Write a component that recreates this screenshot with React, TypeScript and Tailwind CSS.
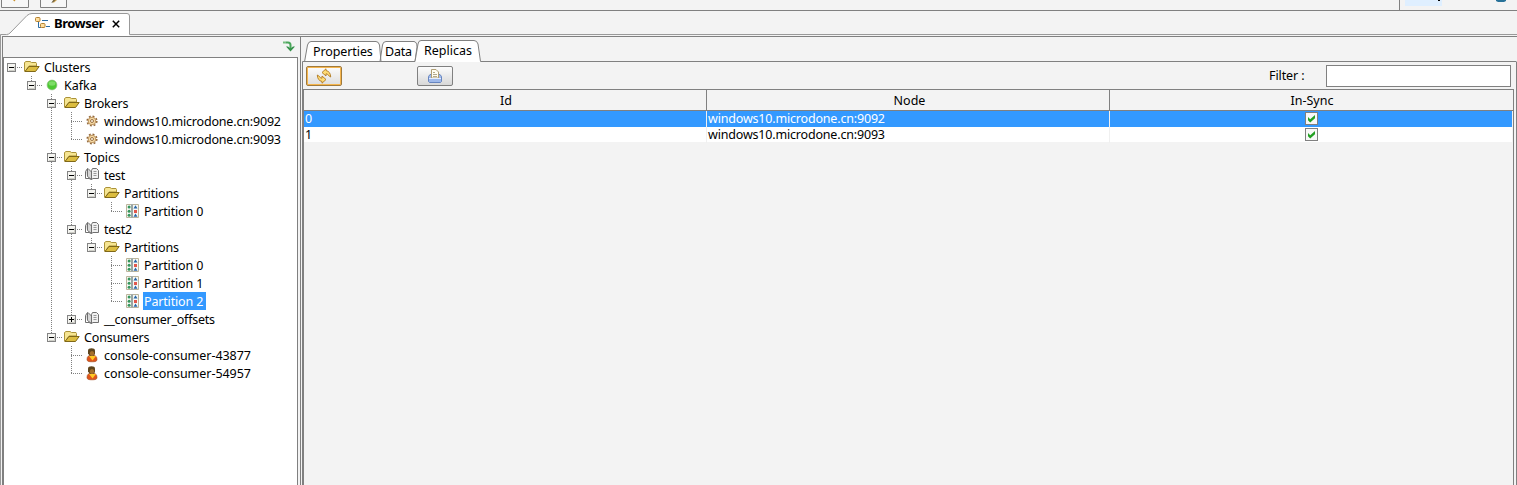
import type { ReactNode } from 'react';

type IconKind = 'folder' | 'dot' | 'gear' | 'book' | 'grid' | 'person';
type TreeRow = { guides: string; box?: '+' | '-'; icon: IconKind; label: string; selected?: boolean };

/* Guide letters, one per level: "." blank, "v" vertical, "t" branch, "l" last branch, "r" root */
const rows: TreeRow[] = [
  { guides: 'r', box: '-', icon: 'folder', label: 'Clusters' },
  { guides: '.l', box: '-', icon: 'dot', label: 'Kafka' },
  { guides: '..t', box: '-', icon: 'folder', label: 'Brokers' },
  { guides: '..vt', icon: 'gear', label: 'windows10.microdone.cn:9092' },
  { guides: '..vl', icon: 'gear', label: 'windows10.microdone.cn:9093' },
  { guides: '..t', box: '-', icon: 'folder', label: 'Topics' },
  { guides: '..vt', box: '-', icon: 'book', label: 'test' },
  { guides: '..vvl', box: '-', icon: 'folder', label: 'Partitions' },
  { guides: '..vv.l', icon: 'grid', label: 'Partition 0' },
  { guides: '..vt', box: '-', icon: 'book', label: 'test2' },
  { guides: '..vvl', box: '-', icon: 'folder', label: 'Partitions' },
  { guides: '..vv.t', icon: 'grid', label: 'Partition 0' },
  { guides: '..vv.t', icon: 'grid', label: 'Partition 1' },
  { guides: '..vv.l', icon: 'grid', label: 'Partition 2', selected: true },
  { guides: '..vl', box: '+', icon: 'book', label: '__consumer_offsets' },
  { guides: '..l', box: '-', icon: 'folder', label: 'Consumers' },
  { guides: '...t', icon: 'person', label: 'console-consumer-43877' },
  { guides: '...l', icon: 'person', label: 'console-consumer-54957' },
];

const tracking: Record<IconKind, string> = {
  folder: 'tracking-[-0.16px]',
  dot: '',
  gear: 'tracking-[-0.18px]',
  book: 'tracking-[-0.25px]',
  grid: 'tracking-[-0.16px]',
  person: 'tracking-[-0.04px]',
};

function Guide({ kind, box }: { kind: string; box?: '+' | '-' }) {
  const up = kind === 'v' || kind === 't' || kind === 'l';
  const down = kind === 'v' || kind === 't';
  const across = kind === 't' || kind === 'l' || kind === 'r';
  return (
    <svg width="20" height="18" className="block shrink-0" shapeRendering="crispEdges">
      {up && <path d="M7.500 0V9" stroke="#808080" strokeDasharray="1 1" />}
      {down && <path d="M7.500 10V18" stroke="#808080" strokeDasharray="1 1" />}
      {across && <path d="M7 9.500H19" stroke="#808080" strokeDasharray="1 1" />}
      {box && (
        <>
          <rect x="3.500" y="5.500" width="8" height="8" fill="#f4f4f0" stroke="#848484" />
          <path d="M5 12.500H11M10.500 8V13" stroke="#cfcfc8" />
          <path d="M5 9.500H10" stroke="#000" />
          {box === '+' && <path d="M7.500 7V12" stroke="#000" />}
        </>
      )}
    </svg>
  );
}

function TreeIcon({ kind }: { kind: IconKind }) {
  let art: ReactNode = null;
  if (kind === 'folder')
    art = (
      <>
        <path d="M.5 13V4.500L2 3.500h4L7.500 4.500H12l.5 1v2.500H5L1 13.500z" fill="#f6e592" stroke="#ab9238" />
        <path d="M1 13.500 5 8.500h10.200L11.500 13.500z" fill="#dcbd40" stroke="#806818" />
      </>
    );
  if (kind === 'dot')
    art = (
      <>
        <circle cx="8" cy="9" r="4.900" fill="#4cc832" stroke="#8fbd84" strokeWidth=".7" />
        <ellipse cx="8" cy="7.500" rx="3.400" ry="2.200" fill="#7ddc67" />
      </>
    );
  if (kind === 'gear')
    art = (
      <>
        <circle cx="8" cy="9" r="4.800" fill="none" stroke="#94683a" strokeWidth="1.600" strokeDasharray="1.900 1.870" />
        <circle cx="8" cy="9" r="3.800" fill="#f5d9a4" stroke="#b58a52" strokeWidth=".9" />
        <circle cx="8" cy="9" r="1.500" fill="#fff8e8" stroke="#94683a" strokeWidth=".9" />
      </>
    );
  if (kind === 'book')
    art = (
      <>
        <path d="M1.500 12.500V5.500L3.500 2.500V10.500L7.500 13.500V6L4 2.500" fill="#d6d6d6" stroke="#707070" />
        <path d="M1.500 12.500H5L7.500 13.500" fill="none" stroke="#707070" />
        <path d="M7.500 4.500 8.500 2.500H12.500L14.500 4.500V12.500H9L7.500 13.500z" fill="#f0f0f0" stroke="#707070" />
        <path d="M9.500 5.500H12.500M9.500 7.500H12.500M9.500 9.500H12.500" stroke="#999" />
      </>
    );
  if (kind === 'grid')
    art = (
      <>
        <path d="M2.500 2.500H7.500V15.500H2.500zM8.500 2.500H14.500V15.500H8.500z" fill="#f7f8f5" stroke="#bcb49b" />
        <path d="M8 2V16" stroke="#7b95aa" />
        <g fill="#35965c">
          <circle cx="5.100" cy="5" r="1.500" />
          <circle cx="5.100" cy="9.200" r="1.500" />
          <circle cx="5.100" cy="13.200" r="1.500" />
        </g>
        <path d="M11.500 3.200 13.500 6.500H9.500zM11.500 11.500 13.500 14.800H9.500z" fill="#2866a8" />
        <rect x="10" y="8" width="3" height="3" fill="#e2574c" />
      </>
    );
  if (kind === 'person')
    art = (
      <>
        <path d="M3 13.500c0-3 1.500-4.500 5-4.500s5 1.500 5 4.500c0 2-2 2.300-5 2.300S3 15.500 3 13.500z" fill="#e0551c" stroke="#9a4a20" strokeWidth=".6" />
        <path d="M5 10 8.500 14.500 12 10z" fill="#ffc824" />
        <path d="M4 7.500V4.500C4 3 5.500 2.200 7.500 2.200s3.500.8 3.500 2.300V8L9.500 10H6z" fill="#5d451d" />
        <ellipse cx="8" cy="7.500" rx="2.200" ry="2.500" fill="#a5702c" />
      </>
    );
  return (
    <svg width="16" height="18" className="block shrink-0">
      {art}
    </svg>
  );
}

function Check() {
  return (
    <svg width="13" height="13" className="block">
      <rect x=".5" y=".5" width="12" height="12" fill="#f8f8f8" stroke="#808080" />
      <path d="M3 5 5.200 7.200 10 3V6.300L5.200 10.500 3 8.300z" fill="#22a022" />
    </svg>
  );
}

function Tree() {
  return (
    <div className="flex-1 border-t border-r border-l border-[#808080] bg-white">
      {rows.map((r, i) => (
        <div key={i} className="flex h-[18px] items-start">
          {r.guides.split('').map((g, k) => (
            <Guide key={k} kind={g} box={k === r.guides.length - 1 ? r.box : undefined} />
          ))}
          <TreeIcon kind={r.icon} />
          <span
            className={
              tracking[r.icon] +
              (r.selected
                ? ' ml-[3px] h-[18px] bg-[#3399ff] pt-px pr-[3px] pl-px leading-[18px] whitespace-nowrap text-white'
                : ' ml-1 mt-px h-[18px] leading-[18px] whitespace-nowrap')
            }
          >
            {r.label}
          </span>
        </div>
      ))}
    </div>
  );
}

function Toolbar() {
  return (
    <div className="flex h-[11px] shrink-0 border-b border-[#808080]">
      <svg width="70" height="10" className="block">
        <path d="M1.500 0V7.500H28.500V0M40.500 0V7.500H66.500V0" fill="#f7f7f7" stroke="#808080" />
        <path d="M13 0H15.500L14.500 1.500z" fill="#cb922d" />
        <path d="M52 2.500 53 0H57L54 2.500z" fill="#c59b47" />
        <path d="M52 2.500 54.500 0" stroke="#36404c" />
      </svg>
      <div className="ml-auto flex w-[118px] border-l border-[#808080] pl-[5px]">
        <div className="h-[6px] w-[37px] bg-[#dfefff]">
          <div className="ml-[33px] h-px w-[2px] bg-black" />
        </div>
        <svg width="12" height="4" className="ml-[53px] block">
          <path d="M1 0H11V1L9 2H3L1 1z" fill="#287299" />
        </svg>
      </div>
    </div>
  );
}

function BrowserTab() {
  return (
    <div className="grid h-[25px] shrink-0">
      <svg width="1517" height="25" className="col-start-1 row-start-1 block">
        <path d="M8 23.500 28 3.500Q29.500 2.500 31 2.500H127Q129.500 2.500 129.500 5V25H8z" fill="#fff" />
        <path d="M.5 25V23.500H6.500Q8.500 23.500 10 22L27 4.500Q29.500 2.500 32 2.500H127Q129.500 2.500 129.500 5V23.500H1517" fill="none" stroke="#999" />
      </svg>
      <div className="col-start-1 row-start-1 flex items-start pt-[4px] pl-[34px]">
        <svg width="17" height="16" className="mt-px block shrink-0">
          <path d="M4.500 6V11.500H7M8 4.500H14M12 10.500H16" fill="none" stroke="#2b6ca3" />
          <rect x="1.500" y="1.500" width="4.500" height="4" rx="1" fill="#ffdfa0" stroke="#b5812f" />
          <rect x="6.500" y="7.500" width="4.500" height="4" rx="1" fill="#ffdfa0" stroke="#b5812f" />
        </svg>
        <span className="-mt-px ml-[3px] w-[50px] text-[13px] leading-[18px] font-bold tracking-[-0.5px]">Browser</span>
        <svg width="9" height="9" className="mt-[5px] ml-[8px] block">
          <path d="M.8.8 7.200 7.200M7.200.8.8 7.200" stroke="#000" strokeWidth="1.500" />
        </svg>
      </div>
    </div>
  );
}

function PanelTabs() {
  return (
    <div className="grid h-[25px] shrink-0">
      <svg width="1216" height="25" className="col-start-1 row-start-1 block">
        <path d="M3.500 25 6.500 8Q7.500 4.500 10 4.500H75Q77.500 4.500 78.500 8L80 24.500zM79 24.500 81.500 8Q82 4.500 85 4.500H113Q116 5 116 10L114 24.500z" fill="#fff" stroke="#808080" />
        <path d="M114 25V24.500L117 7Q117.500 3.500 120 3.500H173Q176 3.500 177 7L179.500 24.500V25z" fill="#fff" />
        <path d="M1.500 25V24.500H114L117 7Q117.500 3.500 120 3.500H173Q176 3.500 177 7L179.500 24.500H1215.500" fill="none" stroke="#808080" />
      </svg>
      <div className="col-start-1 row-start-1 flex pl-[12px] leading-[18px]">
        <span className="w-[72px] pt-[6px] tracking-[-0.1px]">Properties</span>
        <span className="w-[39px] pt-[6px] tracking-[-0.2px]">Data</span>
        <span className="pt-[5px]">Replicas</span>
      </div>
    </div>
  );
}

function ActionBar() {
  return (
    <div className="flex h-[27px] shrink-0 items-start pl-[3px]">
      <button className="mt-[4px] flex h-[20px] w-[36px] items-center justify-center rounded-[2px] border border-[#a07a3c] bg-linear-to-b from-[#fcfcfc] to-[#dedede] shadow-[inset_0_0_0_1px_#f6b64e]">
        <svg width="16" height="16" fill="#ffdc75" stroke="#b0781f" strokeWidth=".9" strokeLinejoin="round">
          <path d="M6 4.500 10 .8V2.500Q14.500 3.500 14.700 9L12.500 7.500Q12 5.800 10 5.800V8z" />
          <path d="M10 11.500 6 15.200V13.500Q1.500 12.500 1.300 7L3.500 8.500Q4 10.200 6 10.200V8z" />
        </svg>
      </button>
      <button className="mt-[4px] ml-[75px] flex h-[20px] w-[36px] items-center justify-center rounded-[2px] border border-[#808080] bg-linear-to-b from-[#fcfcfc] to-[#d8d8d8]">
        <svg width="16" height="16">
          <path d="M1.500 8.500 3 6.500H13L14.500 8.500V13.500L13.500 14.500H2.500L1.500 13.500z" fill="#9fb9ea" stroke="#6785bf" />
          <path d="M4.500 10V1.500H9L11.500 4V10z" fill="#fffdf2" stroke="#b09f76" />
          <path d="M6 4.500H8M6 6.500H10M6 8.500H10" stroke="#b3a98c" />
          <path d="M2 10.500H14" stroke="#e4edff" />
        </svg>
      </button>
      <span className="mt-[5px] ml-auto w-[57px] leading-[18px] tracking-[-0.1px]">Filter :</span>
      <input aria-label="Filter" className="mt-[3px] mr-[3px] h-[22px] w-[185px] border border-[#808080] bg-white outline-none" />
    </div>
  );
}

const replicas = [
  { id: '0', node: 'windows10.microdone.cn:9092' },
  { id: '1', node: 'windows10.microdone.cn:9093' },
];

function Table() {
  return (
    <div className="flex-1 border-t border-r border-l border-[#808080]">
      <div className="grid h-[21px] grid-cols-[403px_403px_1fr] border-b border-[#808080] text-center leading-[21px]">
        <div className="border-r border-[#808080] pl-[2px]">Id</div>
        <div className="border-r border-[#808080] pl-[3px]">Node</div>
        <div className="pl-px">In-Sync</div>
      </div>
      {replicas.map((r, i) => (
        <div
          key={r.id}
          className={
            i === 0
              ? 'mr-px grid h-[16px] grid-cols-[403px_403px_1fr] bg-[#3399ff] leading-[16px] text-white'
              : 'mr-px grid h-[15px] grid-cols-[403px_403px_1fr] bg-white leading-[16px]'
          }
        >
          <div className="border-r border-[#f0f0f0] pl-px">{r.id}</div>
          <div className="border-r border-[#f0f0f0] pl-px tracking-[-0.18px]">{r.node}</div>
          <div className="flex justify-center pt-px pl-px">
            <Check />
          </div>
        </div>
      ))}
    </div>
  );
}

export default function App() {
  return (
    <div className="flex h-[485px] w-[1517px] flex-col overflow-hidden bg-[#f3f3f3] font-['Noto_Sans','Open_Sans',sans-serif] text-[12.500px] text-black">
      <Toolbar />
      <BrowserTab />
      <div className="flex min-h-0 flex-1 border-l border-[#999]">
        <div className="ml-px flex w-[296px] flex-col border-t border-l border-[#808080]">
          <div className="flex h-[20px] shrink-0 justify-end pt-[3px] pr-[3px]">
            <svg width="12" height="14">
              <path d="M0 1.500H2.500V3.500H0z" fill="#72bd7c" />
              <path d="M2.500 2.500H5Q7.500 2.500 7.500 5V9" fill="none" stroke="#4aa65b" strokeWidth="2" />
              <path d="M3 6.500H5L7.500 8.500 10 6.500H12L7.500 11.500z" fill="#35924a" />
            </svg>
          </div>
          <Tree />
        </div>
        <div className="h-px w-[2px] bg-[#808080]" />
        <div className="flex w-[1217px] flex-col border-t border-l border-[#808080]">
          <PanelTabs />
          <div className="ml-px flex min-h-0 flex-1 flex-col border-r border-l border-[#808080] pr-[2px]">
            <ActionBar />
            <Table />
          </div>
        </div>
      </div>
    </div>
  );
}
